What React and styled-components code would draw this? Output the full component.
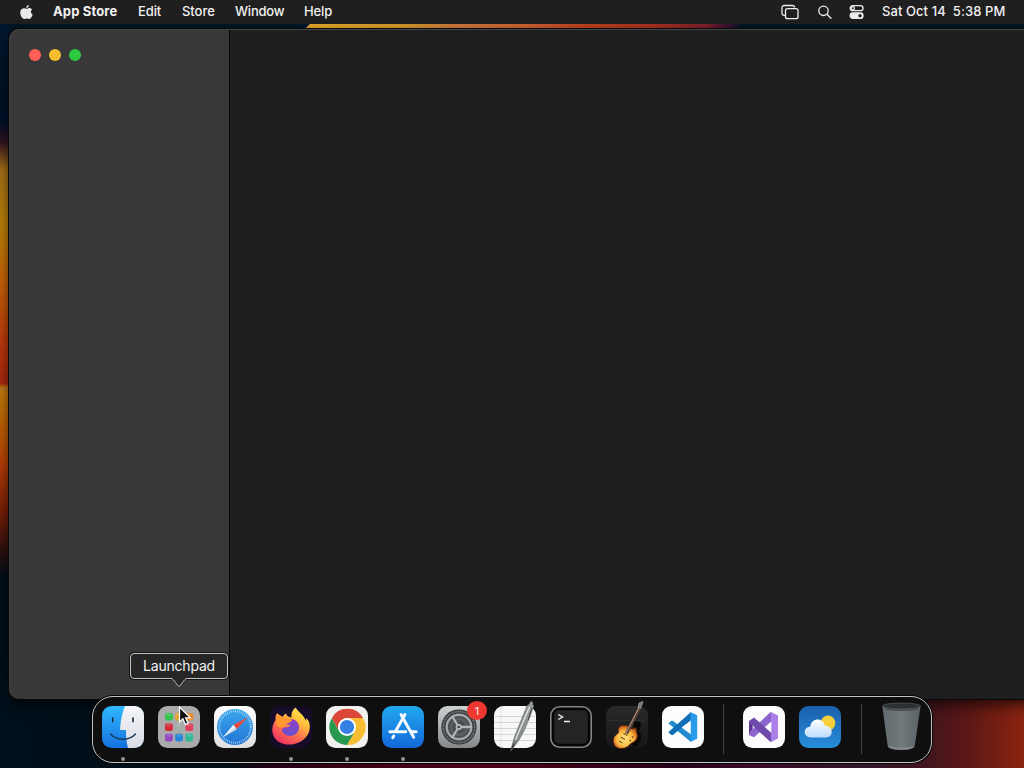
import styled, { createGlobalStyle } from "styled-components";

const GlobalStyle = createGlobalStyle`
  * {
    box-sizing: border-box;
  }
  body {
    margin: 0;
    overflow: hidden;
    background: #000c18;
    font-family: Inter, "Liberation Sans", sans-serif;
  }
`;

const Desktop = styled.div`
  position: relative;
  display: flex;
  flex-direction: column;
  width: 1024px;
  height: 768px;
  overflow: hidden;
  background:
    linear-gradient(135deg, #00182d 5px, transparent 6px) 302px 24px / 500px 6px no-repeat,
    linear-gradient(90deg, #e5a52b, #d09a28 22%, #cc7838 34%, #c96232 50%, #bb401b 64%, #a53020 80%, #7a1f2a 92%, #35122f 97%, #001524) 302px 24px / 440px 6px no-repeat,
    linear-gradient(90deg, #00101c 0, #000c16 230px, #250012 275px, #43001a 390px, #4b0017 500px, #26001b 680px, #3b0a28 750px, #30152b 860px, #43151d 930px, #5a1716 965px, #8a2410 1024px) 0 699px / 1024px 69px no-repeat,
    linear-gradient(188deg, transparent 0 361px, #bd7541 362px, transparent 364px) 0 24px / 10px 676px no-repeat,
    linear-gradient(180deg, #00182f 0, #001126 72px, #00102a 98px, #30131f 118px, #a57017 146px, #bd8208 200px, #c76508 255px, #bd3c0b 315px, #a9260d 359px, #c47b0b 364px, #bf6305 400px, #b73d06 440px, #741e07 490px, #271010 530px, #000d19 555px, #00101d 676px) 0 24px / 10px 676px no-repeat,
    #001524;
`;

const MenuBar = styled.header`
  display: flex;
  align-items: center;
  flex: none;
  height: 24px;
  padding: 0 18px 1px 20px;
  background: #1f1f1f;
  color: #f1f1f1;
  font-size: 13px;
  line-height: 15px;
  font-weight: 500;
  white-space: pre;
`;

const MenuItem = styled.span`
  flex: none;
  width: ${(p) => p.$width}px;
  font-weight: ${(p) => (p.$bold ? 700 : 500)};
  letter-spacing: ${(p) => p.$spacing || 0}px;
`;

const AppleIcon = styled.svg`
  width: 13px;
  height: 16px;
  margin-right: 20px;
`;

const StatusArea = styled.div`
  display: flex;
  align-items: center;
  margin-left: auto;
`;

const StatusIcon = styled.svg`
  width: 18px;
  height: 16px;
  margin-right: ${(p) => p.$after}px;
  fill: none;
  stroke: #eee;
  stroke-width: 1.3;
`;

const Clock = styled.span`
  width: 124px;
  letter-spacing: 0.08px;
`;

const Window = styled.main`
  position: absolute;
  top: 29px;
  left: 9px;
  display: flex;
  width: 1040px;
  height: 670px;
  overflow: hidden;
  border-radius: 10px;
  background: #1e1e1e;
  box-shadow: 0 0 0 1px #060708, 0 6px 14px rgba(0, 0, 0, 0.65);
  &::after {
    content: "";
    position: absolute;
    inset: 0;
    border-top: 1px solid #484848;
    border-left: 1px solid #444;
    border-radius: 10px;
  }
`;

const Sidebar = styled.aside`
  width: 221px;
  padding: 20px;
  border-right: 1px solid #080808;
  background: #383838;
`;

const TrafficLights = styled.div`
  display: flex;
  gap: 8px;
`;

const Light = styled.span`
  width: 12px;
  height: 12px;
  border-radius: 50%;
  background: ${(p) => p.$color};
`;

const Dock = styled.nav`
  position: absolute;
  top: 696px;
  left: 92px;
  display: flex;
  gap: 14px;
  width: 840px;
  height: 67px;
  padding: 9px;
  border: 1px solid #c3c3c3;
  border-radius: 21px;
  background: #0f0f10;
  box-shadow: 0 0 0 1px #050505;
`;

const DockItem = styled.div`
  position: relative;
  flex: none;
  width: 42px;
  height: 42px;
  svg {
    display: block;
    width: 42px;
    height: 42px;
    overflow: visible;
  }
`;

const RunningDot = styled.i`
  position: absolute;
  top: 51px;
  left: 19px;
  width: 4px;
  height: 4px;
  border-radius: 50%;
  background: #969696;
`;

const Separator = styled.div`
  flex: none;
  width: 1px;
  height: 50px;
  margin: -2px ${(p) => p.$right}px 0 ${(p) => p.$left}px;
  background: #424242;
`;

const Badge = styled.span`
  position: absolute;
  top: -5px;
  right: -7px;
  display: grid;
  place-items: center;
  width: 20px;
  height: 19px;
  border-radius: 50%;
  background: #ed3730;
  color: #ffe8e6;
  font-size: 11px;
`;

const Tooltip = styled.div`
  position: absolute;
  top: 653px;
  left: 130px;
  display: flex;
  align-items: center;
  justify-content: center;
  width: 98px;
  height: 26px;
  padding-bottom: 2px;
  border: 1px solid #c4c4c4;
  border-radius: 4px;
  background: #262626;
  box-shadow: 0 0 0 1px #111;
  color: #f2f2f2;
  font-size: 14px;
  letter-spacing: -0.2px;
`;

const TooltipArrow = styled.svg`
  position: absolute;
  top: 24px;
  left: 38px;
  width: 20px;
  height: 11px;
`;

const Cursor = styled.svg`
  position: absolute;
  top: 706px;
  left: 178px;
  width: 14px;
  height: 20px;
`;

const Tile = ({ fill }) => <rect width="42" height="42" rx="9.5" fill={fill} />;

const Gradient = ({ id, from, to, x2 = 0, y2 = 1 }) => (
  <linearGradient id={id} x1="0" y1="0" x2={x2} y2={y2}>
    <stop stopColor={from} />
    <stop offset="1" stopColor={to} />
  </linearGradient>
);

const Finder = () => (
  <svg viewBox="0 0 42 42">
    <defs>
      <Gradient id="finderBlue" from="#31b8fd" to="#1471df" />
      <Gradient id="finderWhite" from="#f5f6f8" to="#d9dce5" />
      <clipPath id="finderClip"><rect width="42" height="42" rx="9.5" /></clipPath>
    </defs>
    <g clipPath="url(#finderClip)">
      <rect width="42" height="42" fill="url(#finderBlue)" />
      <path d="M23 0C20 7 18.5 15 18 24h6c-.2 6 .4 12 2 18h16V0z" fill="url(#finderWhite)" />
      <path d="M10.7 12v3.6M31 12v3.6" stroke="#183248" strokeWidth="1.7" strokeLinecap="round" />
      <path d="M8.5 28c6.5 7 18.5 7 25 0" fill="none" stroke="#173b5c" strokeWidth="1.5" strokeLinecap="round" />
    </g>
  </svg>
);

const launchpadColors = ["#36c44f", "#e4a52e", "#e88a28", "#d42a35", "#a3aea9", "#e0405a", "#9546c0", "#2585d5", "#31b996"];

const Launchpad = () => (
  <svg viewBox="0 0 42 42">
    <Tile fill="#aaa9ab" />
    {launchpadColors.map((color, i) => {
      const x = 7 + (i % 3) * 10.2;
      const y = 7 + Math.floor(i / 3) * 10.4;
      return (
        <g key={color}>
          <rect x={x} y={y} width="7.8" height="7.6" rx="1.8" fill={color} />
          <path d={`M${x + 1.5} ${y + 1.8}h4.8`} stroke="#fff" strokeOpacity=".16" strokeWidth="2" />
        </g>
      );
    })}
  </svg>
);

const Safari = () => (
  <svg viewBox="0 0 42 42">
    <defs>
      <Gradient id="safariBlue" from="#3ba8ed" to="#2374d5" />
      <Gradient id="safariTile" from="#fff" to="#dedede" />
    </defs>
    <Tile fill="url(#safariTile)" />
    <circle cx="21" cy="21" r="18" fill="url(#safariBlue)" />
    <circle cx="21" cy="21" r="15.8" fill="none" stroke="#d5efff" strokeWidth="2.2" strokeDasharray=".6 1.4" />
    <path d="M34 11.3 19.4 18.8l3.2 4.4z" fill="#e64b43" />
    <path d="M8.8 31.3 19.4 18.8l3.2 4.4z" fill="#f7f7f8" />
    <path d="m8.8 31.3 13.8-8.1-1.6-2.2z" fill="#c8dbea" />
  </svg>
);

const Firefox = () => (
  <svg viewBox="0 0 42 42">
    <defs>
      <linearGradient id="foxFire" x1=".85" y1=".05" x2=".25" y2="1">
        <stop stopColor="#fff04a" />
        <stop offset=".3" stopColor="#ffc13d" />
        <stop offset=".62" stopColor="#ff714d" />
        <stop offset="1" stopColor="#ed3264" />
      </linearGradient>
      <Gradient id="foxPurple" from="#963ec5" to="#6651cf" />
    </defs>
    <Tile fill="#160c29" />
    <path d="M25.5 1.5c-3.5 3-4.7 6.6-4 10-3-.6-4.8-1.4-5.5-4-2 1-2.6 2-3 3.6L8 8l-.5-1C5 9 5.6 12 5.5 14 0 22 2 31 8 35.5c9 6 26 3.5 31-9.5C41 19 39 14 36 12c.2 1.5.3 2 .2 3C33 8 29 7 25.5 1.5z" fill="url(#foxFire)" />
    <path d="M14 16c5-5.5 14-3 15 4.5 1 9-11 12.5-16 6-1.5-2-1-4 0-5 2.5.2 6 .4 7.5-2.8-2.2.2-5.5-.4-6.5-2.7z" fill="url(#foxPurple)" />
    <path d="M8 9c2 1 5 2 6 3 3-.8 5.5.5 8 2-1 2-2.5 3-5 3.5-2 1-3 2-3.2 4-3.5 0-6 0-7.4-2.5C6 15 7 12 8 9z" fill="#ff982f" />
  </svg>
);

const Chrome = () => (
  <svg viewBox="0 0 42 42">
    <Tile fill="#f1f1ef" />
    <path d="M5.8 12.2A17.8 17.8 0 0 1 37 12H21a9 9 0 0 0-8 13z" fill="#dc4638" />
    <path d="M37 12A17.8 17.8 0 0 1 21 39l8-14a9 9 0 0 0-8-13z" fill="#f8bd32" />
    <path d="M21 39A17.8 17.8 0 0 1 5.8 12.2L13 25c3 5 10 6 15 2z" fill="#299951" />
    <circle cx="21" cy="21" r="8.8" fill="#fff" />
    <circle cx="21" cy="21" r="7.1" fill="#3480e5" />
  </svg>
);

const AppStore = () => (
  <svg viewBox="0 0 42 42">
    <defs><Gradient id="storeBlue" from="#20a8ee" to="#1468d9" /></defs>
    <Tile fill="url(#storeBlue)" />
    <g fill="none" stroke="#f5fbff" strokeWidth="2.9" strokeLinecap="round">
      <path d="m19 8.5 12.7 22.8M23 8.5l-9.6 17M7.8 25.8h16M29.5 25.8h4.6M11.7 30l-1 1.7" />
    </g>
  </svg>
);

const Settings = () => (
  <svg viewBox="0 0 42 42">
    <defs><Gradient id="gearTile" from="#cdd1d1" to="#85888a" /></defs>
    <Tile fill="url(#gearTile)" />
    <circle cx="21" cy="21" r="17.6" fill="#34383a" />
    <circle cx="21" cy="21" r="15.6" fill="none" stroke="#7b8082" strokeWidth="1.8" strokeDasharray="1.1 .7" />
    <circle cx="21" cy="21" r="12.3" fill="#4a4e50" stroke="#a4a9aa" strokeWidth="2.4" />
    <circle cx="21" cy="21" r="8" fill="none" stroke="#5b6062" strokeWidth="2.5" />
    <path d="m19.5 19-5.5-9M23 21h10.5M19.5 23 14 32" stroke="#b2b7b8" strokeWidth="2.3" />
    <circle cx="20.7" cy="21" r="2.2" fill="#414547" stroke="#b2b7b8" strokeWidth="1.8" />
  </svg>
);

const TextEdit = () => (
  <svg viewBox="0 0 42 42">
    <defs><Gradient id="penMetal" from="#5c6262" to="#a3a9a9" x2={1} y2={0.3} /></defs>
    <Tile fill="#f7f7f7" />
    <path d="M1 10.5h40M0 16.5h42M0 22.5h42M0 28.5h42M1 34.5h40" stroke="#d2d2d2" strokeWidth=".9" />
    <path d="M7 0v42" stroke="#deded8" strokeWidth=".8" />
    <path d="m36.5-4.5 2.5.8-.5 2.2 1.2.8-2.4 7.7-6.6 16.8-5.5 10-8 10.9-.6-.3 3.6-12.6 3.8-9.8L33-.2l2.5-1.8z" fill="url(#penMetal)" stroke="#6a7070" strokeWidth=".6" />
    <path d="M35.5 1 26 23l-4.5 11" fill="none" stroke="#d8dddc" strokeWidth="1.7" />
    <path d="m38 2-4 12.5" fill="none" stroke="#363b3b" strokeWidth="1" />
    <path d="m17.2 43.5 3.2-6" stroke="#303434" strokeWidth="1.2" />
  </svg>
);

const Terminal = () => (
  <svg viewBox="0 0 42 42">
    <rect x=".8" y=".8" width="40.4" height="40.4" rx="9" fill="#050505" stroke="#858585" strokeWidth="1.6" />
    <rect x="4.2" y="4.2" width="33.6" height="33.6" rx="5" fill="#242424" />
    <path d="m8.3 8.5 4.3 2.5-4.3 2.5M14 15.5h6" fill="none" stroke="#f0f0f0" strokeWidth="1.4" />
  </svg>
);

const GarageBand = () => (
  <svg viewBox="0 0 42 42">
    <defs>
      <radialGradient id="guitarWood" cx=".48" cy=".58" r=".62">
        <stop stopColor="#ffe97d" />
        <stop offset=".55" stopColor="#fbb842" />
        <stop offset=".85" stopColor="#cd651f" />
        <stop offset="1" stopColor="#7b2a10" />
      </radialGradient>
      <Gradient id="ampTile" from="#2a2a2a" to="#161616" />
    </defs>
    <Tile fill="url(#ampTile)" />
    <path d="M3 14.5h36" stroke="#2e2e2e" />
    <path d="M28 16c8-3 8 4 5 9 4 5 2 14-6 16z" fill="#070707" />
    <path d="M15.7 19.7c-3 .6-3.7 3.3-3 6-.7 2.8-4.5 3.3-5.2 7C6.7 38 9.5 42.5 15 42.5c5 0 7.5-2.3 10-5.2 3-1.3 6.2-3 6.4-7.3.1-2.2-.8-3.2-1-4.8.3-1.5.4-2.7-.5-3.3-1.4-.8-2.2 1.2-4 1-2-.4-2.4-2-4.2-2.8-2-.9-3.3-.8-6-.4z" fill="url(#guitarWood)" stroke="#5c220f" strokeWidth=".7" />
    <path d="M20.5 27.5 34.2.5" stroke="#5a4137" strokeWidth="3.2" />
    <path d="M19.8 27.5 33.5.5" stroke="#b39a8e" strokeWidth="1" />
    <path d="m32.2 1.5.8-4.5 4-1.4-.7 2.3-1.8 4.4z" fill="#777" stroke="#a4a4a4" strokeWidth=".7" />
    <path d="m17.4 27.3 4.2 2.2m-6.8 1.7 4.2 2.2" stroke="#8a5a30" strokeWidth="1.3" />
    <path d="m13 35 3.6 2" stroke="#5c4a35" strokeWidth="1" />
    <circle cx="26.5" cy="31" r=".8" fill="#51240e" />
    <circle cx="24.3" cy="34.5" r=".8" fill="#51240e" />
  </svg>
);

const VSCode = () => (
  <svg viewBox="0 0 42 42">
    <Tile fill="#fdfdfd" />
    <path d="m6.3 17.3 3-2.5h1.5L29 28.5V36z" fill="#218bd0" />
    <path d="m6.3 26.2 3 2.8h1.5L29 14.2V6z" fill="#116fb7" />
    <path d="m28.5 6 6.7 3.2v23.5L28.5 36z" fill="#289cea" />
    <path d="M28.5 15v12.5L20 21.2z" fill="#fdfdfd" />
  </svg>
);

const VisualStudio = () => (
  <svg viewBox="0 0 42 42">
    <Tile fill="#fdfdfd" />
    <path d="m6 15 4 3v8l-4 3z" fill="#56358c" />
    <path d="m6 29 5 2.3L28.5 15.5V6l-1.5.5L6.5 26z" fill="#8b66cd" />
    <path d="m6 15 5-3.6L28.5 27v9l-1.5-.5L6.5 17z" fill="#6f4bae" />
    <path d="m28 6 7 3.5v23L28 36z" fill="#ad80e9" />
    <path d="M28.3 15.5v11L22 21z" fill="#fff" />
    <path d="m9.5 19.2 2.4 2.1-2.4 2z" fill="#d8cdea" />
  </svg>
);

const Weather = () => (
  <svg viewBox="0 0 42 42">
    <defs>
      <Gradient id="weatherSky" from="#1c5fab" to="#278edb" />
      <Gradient id="weatherCloud" from="#fff" to="#bedcff" />
    </defs>
    <Tile fill="url(#weatherSky)" />
    <circle cx="29" cy="17" r="7.4" fill="#f5cf39" />
    <path d="M12.5 31.5c-9 0-8.5-10.5-1.3-10.7C12.5 11 24.5 11.5 26 20c8.5-.6 9 10.8 1.5 11.5z" fill="url(#weatherCloud)" />
  </svg>
);

const Trash = () => (
  <svg viewBox="0 0 42 42">
    <defs>
      <linearGradient id="binMetal">
        <stop stopColor="#626a6d" />
        <stop offset=".5" stopColor="#737a7d" />
        <stop offset="1" stopColor="#5a6164" />
      </linearGradient>
    </defs>
    <path d="m2.3 0 5.4 40q1 4 13.6 4t13.4-4l5.9-40z" fill="url(#binMetal)" />
    <path d="m8 40 .6 1.3q4 2.5 12.7 2.5t12.4-2.5l.7-1.3q-13 3.6-26.4 0" fill="#92989a" opacity=".65" />
    <ellipse cx="21.4" cy="0" rx="19" ry="3" fill="#2c3032" stroke="#565c5e" strokeWidth=".7" />
    <path d="M5 1.5q16 3.6 33 0v2q-17 3-33 0z" fill="#474e50" />
  </svg>
);

const pinnedApps = [
  { name: "Finder", Icon: Finder, running: true },
  { name: "Launchpad", Icon: Launchpad },
  { name: "Safari", Icon: Safari },
  { name: "Firefox", Icon: Firefox, running: true },
  { name: "Chrome", Icon: Chrome, running: true },
  { name: "App Store", Icon: AppStore, running: true },
  { name: "Settings", Icon: Settings, badge: 1 },
  { name: "TextEdit", Icon: TextEdit },
  { name: "Terminal", Icon: Terminal },
  { name: "GarageBand", Icon: GarageBand },
  { name: "VS Code", Icon: VSCode },
];

const recentApps = [
  { name: "Visual Studio", Icon: VisualStudio },
  { name: "Weather", Icon: Weather },
];

const DockApp = ({ app }) => (
  <DockItem>
    <app.Icon />
    {app.badge && <Badge>{app.badge}</Badge>}
    {app.running && <RunningDot />}
  </DockItem>
);

export default function App() {
  return (
    <>
      <GlobalStyle />
      <Desktop>
        <MenuBar>
          <AppleIcon viewBox="0 0 13 16">
            <path d="M8.8 1c.1 1.8-1 3-2.5 3C6.2 2.5 7.4 1.2 8.8 1zM12.2 5.6c-2 1.3-1.5 4.1.5 5C12 12.5 10.8 15 9.3 15c-1 0-1.4-.6-2.5-.6s-1.5.6-2.4.6C2 15 0 10.8.3 8 .6 5 2.6 4 4.2 4.2c1 .1 1.7.6 2.5.6S8.4 4 9.6 4c1 .1 2 .7 2.6 1.6z" fill="#e9e9e9" />
          </AppleIcon>
          <MenuItem $width={85} $spacing={0.14} $bold>App Store</MenuItem>
          <MenuItem $width={44} $spacing={-0.1}>Edit</MenuItem>
          <MenuItem $width={53} $spacing={-0.05}>Store</MenuItem>
          <MenuItem $width={69} $spacing={-0.2}>Window</MenuItem>
          <MenuItem $width={40} $spacing={-0.15}>Help</MenuItem>
          <StatusArea>
            <StatusIcon viewBox="0 0 18 16" $after={17}>
              <path d="M4 11.3H3A2 2 0 0 1 1 9.3V3.5a2 2 0 0 1 2-2h8.5a2 2 0 0 1 2 2" />
              <rect x="4.5" y="4.7" width="12.5" height="10" rx="2" />
            </StatusIcon>
            <StatusIcon viewBox="0 0 18 16" $after={14}>
              <circle cx="7.5" cy="6.8" r="4.7" />
              <path d="m11 10.3 4 4" strokeLinecap="round" />
            </StatusIcon>
            <StatusIcon viewBox="0 0 18 16" $after={16}>
              <rect x="2.2" y="1.7" width="12.8" height="5" rx="2.5" />
              <circle cx="4.8" cy="4.2" r="1.6" />
              <rect x="2.2" y="9" width="12.8" height="5.4" rx="2.7" fill="#eee" />
              <circle cx="12" cy="11.7" r="1.7" fill="#222" stroke="none" />
            </StatusIcon>
            <Clock>Sat Oct 14  5:38 PM</Clock>
          </StatusArea>
        </MenuBar>

        <Window>
          <Sidebar>
            <TrafficLights>
              <Light $color="#ff5f57" />
              <Light $color="#f6bd2e" />
              <Light $color="#2bc840" />
            </TrafficLights>
          </Sidebar>
        </Window>

        <Dock>
          {pinnedApps.map((app) => (
            <DockApp key={app.name} app={app} />
          ))}
          <Separator $left={5} $right={5} />
          {recentApps.map((app) => (
            <DockApp key={app.name} app={app} />
          ))}
          <Separator $left={6} $right={4} />
          <DockItem>
            <Trash />
          </DockItem>
        </Dock>

        <Tooltip>
          Launchpad
          <TooltipArrow viewBox="0 0 20 11">
            <path d="M0 0h20v1.2h-2C15 1.2 11 9 10 9S5 1.2 2 1.2H0z" fill="#262626" />
            <path d="M0 .5h2C5 .5 8.5 8.5 10 8.5S15 .5 18 .5h2" fill="none" stroke="#c4c4c4" />
          </TooltipArrow>
        </Tooltip>
        <Cursor viewBox="0 0 14 20">
          <path d="M1.5 1v15l3.4-3.2 2.5 5.8 2.7-1.2-2.5-5.6h4.7z" fill="#111" stroke="#fff" strokeWidth="1.2" />
        </Cursor>
      </Desktop>
    </>
  );
}
